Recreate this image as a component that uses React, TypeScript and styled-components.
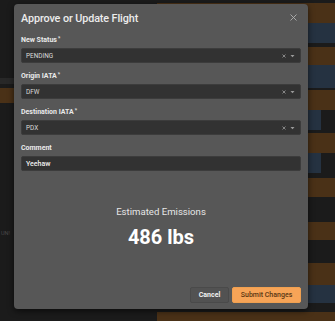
import React from "react";
import styled, { createGlobalStyle } from "styled-components";

const GlobalStyle = createGlobalStyle`
  html, body {
    margin: 0;
    padding: 0;
    background: #1a1a1a;
    font-family: Roboto, "Liberation Sans", sans-serif;
  }
  * { box-sizing: border-box; }
`;

type Band = { h: number; tone: "dark" | "orange" | "blue" | "grey"; w?: number };

const tones = {
  dark: "#1b1b1b",
  orange: "#4a3117",
  blue: "#253241",
  grey: "#282828",
};

const rightBands: Band[] = [
  { h: 3, tone: "dark" },
  { h: 20, tone: "orange" },
  { h: 20, tone: "blue" },
  { h: 4, tone: "dark" },
  { h: 18, tone: "orange" },
  { h: 23, tone: "blue" },
  { h: 2, tone: "dark" },
  { h: 20, tone: "orange" },
  { h: 20, tone: "blue", w: 92 },
  { h: 3, tone: "dark" },
  { h: 20, tone: "orange" },
  { h: 20, tone: "blue", w: 92 },
  { h: 5, tone: "dark" },
  { h: 19, tone: "orange" },
  { h: 25, tone: "dark" },
  { h: 18, tone: "orange" },
  { h: 23, tone: "dark" },
  { h: 22, tone: "orange" },
  { h: 18, tone: "blue" },
  { h: 9, tone: "dark" },
  { h: 30, tone: "orange" },
];

const leftBands: Band[] = [
  { h: 78, tone: "dark" },
  { h: 6, tone: "grey" },
  { h: 4, tone: "dark" },
  { h: 15, tone: "orange" },
  { h: 218, tone: "dark" },
];

const Page = styled.div`
  position: relative;
  width: 335px;
  height: 321px;
  overflow: hidden;
`;

const Dashboard = styled.div`
  display: grid;
  grid-template-columns: 157px 1fr;
  height: 100%;
`;

const Column = styled.div`
  display: flex;
  flex-direction: column;
  background: #181818;
`;

const Stripe = styled.div<{ $h: number; $tone: Band["tone"]; $w?: number }>`
  flex: none;
  height: ${(p) => p.$h}px;
  background: ${(p) =>
    p.$w
      ? `linear-gradient(90deg, ${tones[p.$tone]} ${p.$w}%, ${tones.dark} ${p.$w}%)`
      : tones[p.$tone]};
`;

const FaintText = styled.div`
  position: absolute;
  left: 1px;
  top: 230px;
  font-size: 5.5px;
  color: #4a4a4a;
`;

const Modal = styled.div`
  position: absolute;
  left: 14px;
  top: 4px;
  width: 294px;
  height: 305px;
  background: #575757;
  border-radius: 4px;
  box-shadow: 0 2px 6px rgba(0, 0, 0, 0.6);
  padding: 8px 7px 6px 7px;
  display: flex;
  flex-direction: column;
`;

const Header = styled.div`
  display: flex;
  justify-content: space-between;
  align-items: center;
  height: 13px;
  margin-bottom: 11px;
`;

const Title = styled.div`
  font-size: 10.8px;
  color: #ececec;
  font-weight: 500;
  letter-spacing: -0.1px;
`;

const Close = styled.button`
  border: 0;
  background: none;
  padding: 0;
  margin-right: 4px;
  margin-top: -3px;
  display: flex;
  color: #b0b0b0;
`;

const Field = styled.div`
  display: flex;
  flex-direction: column;
  margin-bottom: 9px;
`;

const Label = styled.div`
  font-size: 7px;
  font-weight: 700;
  color: #eaeaea;
  height: 8px;
  line-height: 8px;
  margin-bottom: 4px;
  sup {
    font-size: 5px;
    margin-left: 1px;
    vertical-align: 2px;
    line-height: 0;
  }
`;

const Control = styled.div<{ $plain?: boolean }>`
  height: 15px;
  background: #323232;
  border-radius: 2px;
  border: 1px solid #3c3c3c;
  display: flex;
  align-items: center;
  padding: 0 5px 0 4px;
  font-size: ${(p) => (p.$plain ? "7px" : "6.4px")};
  color: ${(p) => (p.$plain ? "#f0f0f0" : "#dcdcdc")};
  font-weight: ${(p) => (p.$plain ? 500 : 400)};
`;

const Value = styled.span`
  flex: 1;
`;

const Indicators = styled.span`
  display: flex;
  align-items: center;
  gap: 4px;
  color: #9a9a9a;
`;

const Emissions = styled.div`
  margin-top: 26px;
  display: flex;
  flex-direction: column;
  align-items: center;
`;

const EmissionsLabel = styled.div`
  font-size: 9.6px;
  color: #e6e6e6;
`;

const EmissionsValue = styled.div`
  margin-top: 8px;
  font-size: 20px;
  font-weight: 700;
  color: #ffffff;
`;

const Footer = styled.div`
  margin-top: auto;
  display: flex;
  justify-content: flex-end;
  gap: 3px;
`;

const Button = styled.button<{ $primary?: boolean }>`
  height: 16px;
  border-radius: 2px;
  font-family: Roboto, "Liberation Sans", sans-serif;
  font-size: 7px;
  font-weight: ${(p) => (p.$primary ? 500 : 700)};
  padding: 0;
  width: ${(p) => (p.$primary ? "69px" : "39px")};
  background: ${(p) => (p.$primary ? "#f7a457" : "#525252")};
  color: ${(p) => (p.$primary ? "#5a3613" : "#f2f2f2")};
  border: 1px solid ${(p) => (p.$primary ? "#f0a050" : "#4a4a4a")};
`;

const SelectIcons = () => (
  <Indicators>
    <svg width="4" height="4" viewBox="0 0 4 4">
      <path d="M0.5 0.5 L3.5 3.5 M3.5 0.5 L0.5 3.5" stroke="currentColor" strokeWidth="0.8" />
    </svg>
    <svg width="5" height="4" viewBox="0 0 5 4">
      <path d="M0.5 1 L4.5 1 L2.5 3.3 Z" fill="currentColor" />
    </svg>
  </Indicators>
);

const fields = [
  { label: "New Status", value: "PENDING" },
  { label: "Origin IATA", value: "DFW" },
  { label: "Destination IATA", value: "PDX" },
];

export default function App() {
  return (
    <Page>
      <GlobalStyle />
      <Dashboard>
        <Column>
          {leftBands.map((b, i) => (
            <Stripe key={i} $h={b.h} $tone={b.tone} $w={b.w} />
          ))}
        </Column>
        <Column>
          {rightBands.map((b, i) => (
            <Stripe key={i} $h={b.h} $tone={b.tone} $w={b.w} />
          ))}
        </Column>
      </Dashboard>
      <FaintText>UN!</FaintText>
      <Modal>
        <Header>
          <Title>Approve or Update Flight</Title>
          <Close aria-label="close">
            <svg width="7" height="7" viewBox="0 0 7 7">
              <path d="M0.5 0.5 L6.5 6.5 M6.5 0.5 L0.5 6.5" stroke="currentColor" strokeWidth="0.9" />
            </svg>
          </Close>
        </Header>
        {fields.map((f) => (
          <Field key={f.label}>
            <Label>
              {f.label}
              <sup>*</sup>
            </Label>
            <Control>
              <Value>{f.value}</Value>
              <SelectIcons />
            </Control>
          </Field>
        ))}
        <Field>
          <Label>Comment</Label>
          <Control $plain>
            <Value>Yeehaw</Value>
          </Control>
        </Field>
        <Emissions>
          <EmissionsLabel>Estimated Emissions</EmissionsLabel>
          <EmissionsValue>486 lbs</EmissionsValue>
        </Emissions>
        <Footer>
          <Button>Cancel</Button>
          <Button $primary>Submit Changes</Button>
        </Footer>
      </Modal>
    </Page>
  );
}
